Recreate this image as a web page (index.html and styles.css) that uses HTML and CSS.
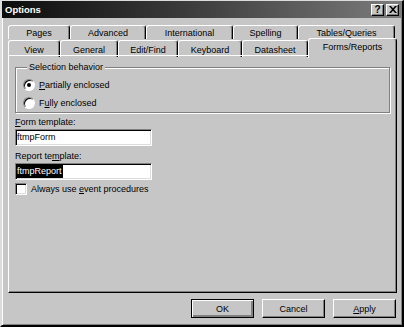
FILE: index.html
```html
<!DOCTYPE html>
<html>

<head>
  <meta charset="UTF-8" />
  <title>Options</title>
  <link rel="stylesheet" href="styles.css">
</head>

<body>
  <div class="window">
    <div class="titlebar">
      <span class="title">Options</span>
      <div class="title-buttons">
        <button class="tb-btn">?</button>
        <button class="tb-btn">
          <svg width="8" height="7" viewBox="0 0 8 7">
            <path d="M0 0h2l2 2.2L6 0h2L5 3.5 8 7H6L4 4.8 2 7H0l3-3.5z" fill="#000" />
          </svg>
        </button>
      </div>
    </div>

    <div class="dialog">
      <!-- Two rows of tabs, the front row holds the active one -->
      <div class="tabs">
        <div class="tab-row back">
          <div class="tab">Pages</div>
          <div class="tab">Advanced</div>
          <div class="tab">International</div>
          <div class="tab">Spelling</div>
          <div class="tab">Tables/Queries</div>
        </div>
        <div class="tab-row front">
          <div class="tab">View</div>
          <div class="tab">General</div>
          <div class="tab">Edit/Find</div>
          <div class="tab">Keyboard</div>
          <div class="tab">Datasheet</div>
          <div class="tab active">Forms/Reports</div>
        </div>
      </div>

      <div class="panel">
        <fieldset class="group">
          <legend>Selection behavior</legend>
          <label class="radio-row"><span class="radio checked"></span><span><u>P</u>artially enclosed</span></label>
          <label class="radio-row"><span class="radio"></span><span>F<u>u</u>lly enclosed</span></label>
        </fieldset>

        <div class="field-label"><u>F</u>orm template:</div>
        <div class="textbox">ftmpForm</div>

        <div class="field-label">Report te<u>m</u>plate:</div>
        <div class="textbox"><span class="selected">ftmpReport</span></div>

        <label class="check-row"><span class="checkbox"></span><span>Always use <u>e</u>vent procedures</span></label>
      </div>

      <div class="buttons">
        <button class="btn default">OK</button>
        <button class="btn">Cancel</button>
        <button class="btn"><u>A</u>pply</button>
      </div>
    </div>
  </div>
</body>

</html>
```

FILE: styles.css
```css
/* Reset default margin and padding */
* {
  margin: 0;
  padding: 0;
  box-sizing: border-box;
}

body {
  width: 404px;
  height: 327px;
  overflow: hidden;
  background-color: #c6c6c6;
  font-family: "Liberation Sans", Arial, sans-serif;
  font-size: 9px;
  color: #000;
}

u {
  text-decoration: underline;
  text-underline-offset: 1px;
}

/* Outer window frame */
.window {
  display: flex;
  flex-direction: column;
  width: 404px;
  height: 327px;
  background-color: #c6c6c6;
  border-style: solid;
  border-width: 1px 2px 2px 2px;
  border-color: #dcdcdc #000 #000 #dcdcdc;
  box-shadow: inset 1px 0 0 #fff, inset -1px -1px 0 #808080;
}

/* Title bar */
.titlebar {
  display: flex;
  align-items: center;
  justify-content: space-between;
  height: 17px;
  padding: 0 3px 0 3px;
  background: linear-gradient(90deg, #0c0c0c 0%, #3a3a3a 45%, #7c7c7c 100%);
}

.title {
  color: #fff;
  font-weight: bold;
  font-size: 9.5px;
}

.title-buttons {
  display: flex;
  gap: 2px;
}

.tb-btn {
  display: flex;
  align-items: center;
  justify-content: center;
  width: 13px;
  height: 12px;
  background-color: #c6c6c6;
  border-style: solid;
  border-width: 1px;
  border-color: #fff #000 #000 #fff;
  box-shadow: inset -1px -1px 0 #808080;
  font-family: "Liberation Sans", Arial, sans-serif;
  font-weight: bold;
  font-size: 10px;
  line-height: 10px;
  color: #000;
}

/* Dialog body */
.dialog {
  display: flex;
  flex-direction: column;
  flex: 1;
  padding: 7px 5px 7px 6px;
}

/* Tabs */
.tabs {
  display: flex;
  flex-direction: column;
  height: 30px;
}

.tab-row {
  display: grid;
}

.tab-row.back {
  grid-template-columns: 62px 76px 87px 65px 97px;
  height: 13px;
}

.tab-row.front {
  grid-template-columns: 52px 58px 60px 64px 66px 89px;
  height: 17px;
  align-items: end;
}

.tab {
  display: flex;
  align-items: center;
  justify-content: center;
  background-color: #c6c6c6;
  border-style: solid;
  border-width: 1px 1px 0 1px;
  border-color: #fff #000 #000 #fff;
  border-radius: 3px 3px 0 0;
  box-shadow: inset -1px 0 0 #808080;
  white-space: nowrap;
}

.back .tab {
  height: 14px;
  padding-top: 1px;
}

.front .tab {
  height: 17px;
  padding-top: 1px;
}

.front .tab.active {
  position: relative;
  z-index: 1;
  height: 20px;
  margin-bottom: -1px;
  padding-bottom: 5px;
}

/* Tab page */
.panel {
  display: flex;
  flex-direction: column;
  height: 238px;
  padding: 5px 6px 0 6px;
  border-style: solid;
  border-width: 1px 1px 1px 1px;
  border-color: #fff #000 #000 #fff;
  box-shadow: inset -1px -1px 0 #808080;
}

.group {
  display: flex;
  flex-direction: column;
  padding: 3px 0 0 7px;
  height: 52px;
  border: 1px solid #808080;
  box-shadow: inset 1px 1px 0 #fff, 1px 1px 0 #fff;
}

.group legend {
  margin-left: 4px;
  padding: 0 2px;
  line-height: 12px;
  background-color: #c6c6c6;
}

.radio-row,
.check-row {
  display: flex;
  align-items: center;
  gap: 4px;
  height: 18px;
}

.radio {
  position: relative;
  width: 12px;
  height: 12px;
  border-radius: 50%;
  background-color: #fff;
  border-style: solid;
  border-width: 1px;
  border-color: #808080 #fff #fff #808080;
  box-shadow: inset 1px 1px 0 #000;
}

.radio.checked::after {
  content: "";
  position: absolute;
  left: 3px;
  top: 3px;
  width: 4px;
  height: 4px;
  border-radius: 50%;
  background-color: #000;
}

.field-label {
  margin-top: 3px;
  line-height: 12px;
}

.textbox {
  width: 137px;
  height: 17px;
  margin: 1px 0 1px 0;
  padding: 1px 0 0 1px;
  line-height: 13px;
  background-color: #fff;
  border-style: solid;
  border-width: 1px;
  border-color: #808080 #fff #fff #808080;
  box-shadow: inset 1px 1px 0 #000, inset -1px -1px 0 #dcdcdc;
}

.selected {
  display: inline-block;
  background-color: #000;
  color: #fff;
  padding: 0 1px 0 0;
}

.check-row {
  height: 12px;
  margin-top: 2px;
}

.checkbox {
  width: 12px;
  height: 12px;
  background-color: #fff;
  border-style: solid;
  border-width: 1px;
  border-color: #808080 #fff #fff #808080;
  box-shadow: inset 1px 1px 0 #000, inset -1px -1px 0 #dcdcdc;
}

/* Bottom buttons */
.buttons {
  display: flex;
  justify-content: flex-end;
  gap: 8px;
  margin-top: 6px;
  padding-right: 1px;
}

.btn {
  width: 63px;
  height: 19px;
  background-color: #c6c6c6;
  font-family: "Liberation Sans", Arial, sans-serif;
  font-size: 9px;
  color: #000;
  border-style: solid;
  border-width: 1px;
  border-color: #fff #000 #000 #fff;
  box-shadow: inset -1px -1px 0 #808080;
}

.btn.default {
  border: 1px solid #000;
  box-shadow: inset 1px 1px 0 #fff, inset -2px -2px 0 #808080;
}
```
